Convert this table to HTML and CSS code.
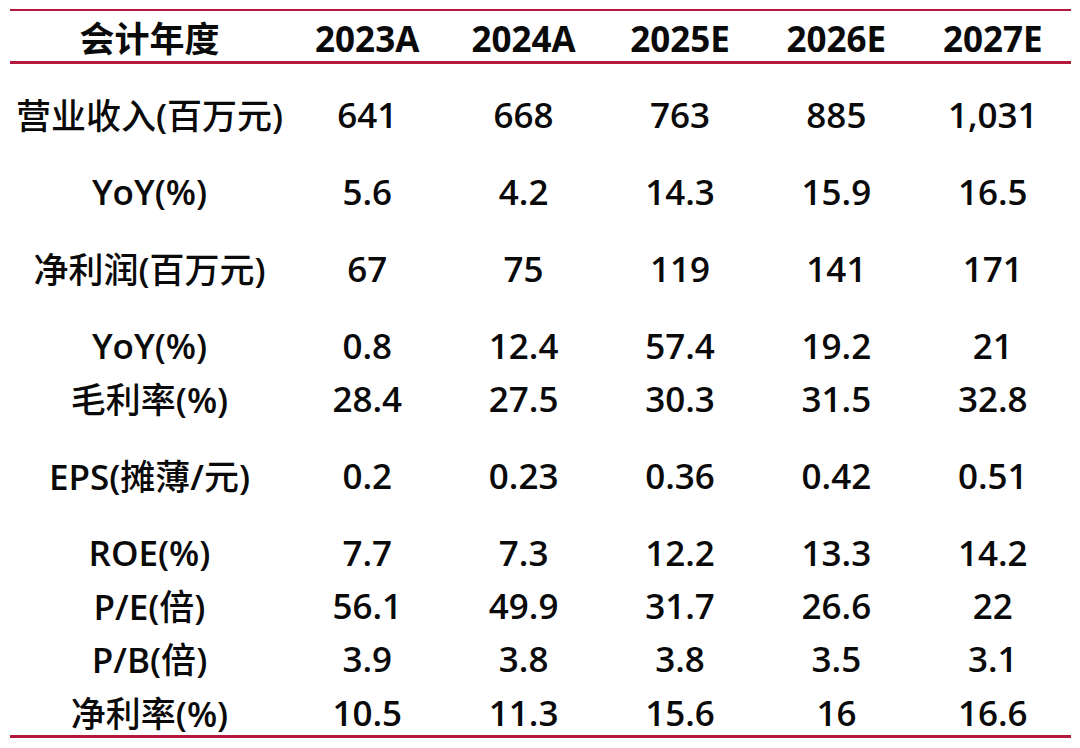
FILE: index.html
```html
<!DOCTYPE html>
<html lang="zh-CN">
<head>
<meta charset="utf-8">
<title>盈利预测</title>
<link rel="stylesheet" href="styles.css">
</head>
<body>
<div class="table">
  <div class="row head">
    <div class="cell label">会计年度</div>
    <div class="cell">2023A</div>
    <div class="cell">2024A</div>
    <div class="cell">2025E</div>
    <div class="cell">2026E</div>
    <div class="cell">2027E</div>
  </div>
  <div class="row spaced">
    <div class="cell label"><span class="zh">营业收入</span>(<span class="zh">百万元</span>)</div>
    <div class="cell">641</div><div class="cell">668</div><div class="cell">763</div><div class="cell">885</div><div class="cell">1,031</div>
  </div>
  <div class="row spaced">
    <div class="cell label">YoY(%)</div>
    <div class="cell">5.6</div><div class="cell">4.2</div><div class="cell">14.3</div><div class="cell">15.9</div><div class="cell">16.5</div>
  </div>
  <div class="row spaced">
    <div class="cell label"><span class="zh">净利润</span>(<span class="zh">百万元</span>)</div>
    <div class="cell">67</div><div class="cell">75</div><div class="cell">119</div><div class="cell">141</div><div class="cell">171</div>
  </div>
  <div class="row spaced">
    <div class="cell label">YoY(%)</div>
    <div class="cell">0.8</div><div class="cell">12.4</div><div class="cell">57.4</div><div class="cell">19.2</div><div class="cell">21</div>
  </div>
  <div class="row">
    <div class="cell label"><span class="zh">毛利率</span>(%)</div>
    <div class="cell">28.4</div><div class="cell">27.5</div><div class="cell">30.3</div><div class="cell">31.5</div><div class="cell">32.8</div>
  </div>
  <div class="row spaced">
    <div class="cell label">EPS(<span class="zh">摊薄</span>/<span class="zh">元</span>)</div>
    <div class="cell">0.2</div><div class="cell">0.23</div><div class="cell">0.36</div><div class="cell">0.42</div><div class="cell">0.51</div>
  </div>
  <div class="row spaced">
    <div class="cell label">ROE(%)</div>
    <div class="cell">7.7</div><div class="cell">7.3</div><div class="cell">12.2</div><div class="cell">13.3</div><div class="cell">14.2</div>
  </div>
  <div class="row">
    <div class="cell label">P/E(<span class="zh">倍</span>)</div>
    <div class="cell">56.1</div><div class="cell">49.9</div><div class="cell">31.7</div><div class="cell">26.6</div><div class="cell">22</div>
  </div>
  <div class="row">
    <div class="cell label">P/B(<span class="zh">倍</span>)</div>
    <div class="cell">3.9</div><div class="cell">3.8</div><div class="cell">3.8</div><div class="cell">3.5</div><div class="cell">3.1</div>
  </div>
  <div class="row last">
    <div class="cell label"><span class="zh">净利率</span>(%)</div>
    <div class="cell">10.5</div><div class="cell">11.3</div><div class="cell">15.6</div><div class="cell">16</div><div class="cell">16.6</div>
  </div>
</div>
</body>
</html>
```

FILE: styles.css
```css
html, body {
  margin: 0;
  padding: 0;
  background: #ffffff;
}

body {
  font-family: "Open Sans", "Noto Sans CJK SC", sans-serif;
  color: #0a0a0a;
  font-size: 35px;
  font-weight: 600;
}

.table {
  width: 1061px;
  margin: 9px 0 0 10px;
  border-top: 2px solid #b2193d;
  border-bottom: 3px solid #b2193d;
}

.row {
  display: grid;
  grid-template-columns: 279px repeat(5, 1fr);
  height: 53px;
  box-sizing: border-box;
  align-items: center;
}

.row.head {
  height: 53px;
  padding-top: 4px;
  font-weight: 700;
  border-bottom: 3px solid #b2193d;
}

.row.spaced {
  margin-top: 24px;
}

.row.last {
  height: 50px;
  padding-top: 4px;
}

.cell {
  text-align: center;
  line-height: 1;
  white-space: nowrap;
}

.zh {
  font-family: "Noto Sans CJK SC", sans-serif;
  font-weight: 500;
}

.head .zh,
.head .label {
  font-weight: 700;
}
```
